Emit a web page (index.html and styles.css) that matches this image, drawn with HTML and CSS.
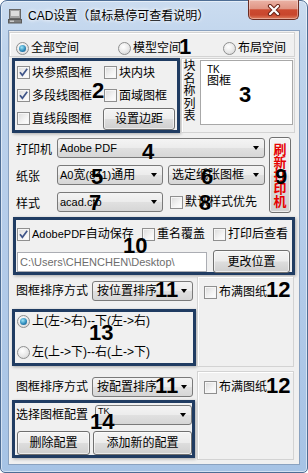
FILE: index.html
```html
<!DOCTYPE html>
<html lang="zh-CN">
<head>
<meta charset="utf-8">
<title>CAD设置</title>
<link rel="stylesheet" href="styles.css">
</head>
<body>
<div class="window">
  <div class="titlebar">
    <svg class="app-icon" width="14" height="16" viewBox="0 0 14 16">
      <rect x="1.5" y="1.5" width="11" height="9" fill="#a4a4a4" stroke="#666"/>
      <rect x="3" y="3" width="8" height="5" fill="#dcdcdc"/>
      <rect x="0.5" y="11.5" width="13" height="3.5" fill="#808080" stroke="#5a5a5a"/>
      <rect x="2" y="12.5" width="4" height="1.5" fill="#c8c8c8"/>
    </svg>
    <span class="title">CAD设置（鼠标悬停可查看说明）</span>
    <div class="close-btn">
      <svg width="14" height="12" viewBox="0 0 14 12">
        <path d="M3 2 L11 10 M11 2 L3 10" stroke="#6b2418" stroke-width="4.2" stroke-linecap="round"/>
        <path d="M3 2 L11 10 M11 2 L3 10" stroke="#ffffff" stroke-width="2.2" stroke-linecap="round"/>
      </svg>
    </div>
  </div>

  <div class="client">
    <div class="panel space-row">
      <label class="opt w-space1"><span class="radio on"></span>全部空间</label>
      <label class="opt w-space2"><span class="radio"></span>模型空间</label>
      <label class="opt"><span class="radio"></span>布局空间</label>
    </div>

    <div class="row-b">
      <div class="group g2">
        <label class="opt"><span class="check on"><svg width="11" height="11" viewBox="0 0 11 11"><path d="M2 5.2 L4.4 8.3 L9.2 1.8" fill="none" stroke="#3f5589" stroke-width="1.7"/></svg></span>块参照图框</label>
        <label class="opt"><span class="check"></span>块内块</label>
        <label class="opt"><span class="check on"><svg width="11" height="11" viewBox="0 0 11 11"><path d="M2 5.2 L4.4 8.3 L9.2 1.8" fill="none" stroke="#3f5589" stroke-width="1.7"/></svg></span>多段线图框</label>
        <label class="opt"><span class="check"></span>面域图框</label>
        <label class="opt"><span class="check"></span>直线段图框</label>
        <div class="btn btn-margin">设置边距</div>
      </div>
      <div class="panel block-panel">
        <div class="vlabel">块名称列表</div>
        <div class="listbox">
          <div class="lb-tk">TK</div>
          <div class="lb-item">图框</div>
        </div>
      </div>
    </div>

    <div class="row-c">
      <div class="printer-fields">
        <div class="field-row">
          <span class="field-label">打印机</span>
          <div class="combo combo-wide"><span class="lat">Adobe PDF</span><span class="arrow"></span></div>
        </div>
        <div class="field-row">
          <span class="field-label">纸张</span>
          <div class="combo combo-a"><span class="lat">A0</span>宽<span class="lat">(841)</span>通用<span class="arrow"></span></div>
          <div class="combo combo-b">选定纸张图框<span class="arrow"></span></div>
        </div>
        <div class="field-row">
          <span class="field-label">样式</span>
          <div class="combo combo-a"><span class="lat">acad.ctb</span><span class="arrow"></span></div>
          <label class="opt default-style"><span class="check"></span>默认样式优先</label>
        </div>
      </div>
      <div class="btn refresh-btn"><span class="refresh-text">刷新打印机</span></div>
    </div>

    <div class="group g10">
      <div class="pdf-row">
        <label class="opt w-pdf"><span class="check on"><svg width="11" height="11" viewBox="0 0 11 11"><path d="M2 5.2 L4.4 8.3 L9.2 1.8" fill="none" stroke="#3f5589" stroke-width="1.7"/></svg></span><span class="lat">AdobePDF</span>自动保存</label>
        <label class="opt w-rename"><span class="check"></span>重名覆盖</label>
        <label class="opt"><span class="check"></span>打印后查看</label>
      </div>
      <div class="path-row">
        <div class="path-box"><span class="lat">C:\Users\CHENCHEN\Desktop\</span></div>
        <div class="btn btn-change">更改位置</div>
      </div>
    </div>

    <div class="sort-section s1">
      <div class="sort-left">
        <div class="sort-row">
          <span class="sort-label">图框排序方式</span>
          <div class="combo combo-sort">按位置排序<span class="arrow"></span></div>
        </div>
        <div class="group g13">
          <label class="opt"><span class="radio on"></span>上(左-&gt;右)--下(左-&gt;右)</label>
          <label class="opt"><span class="radio"></span>左(上-&gt;下)--右(上-&gt;下)</label>
        </div>
      </div>
      <div class="panel right-panel">
        <label class="opt fill-row"><span class="check"></span>布满图纸</label>
      </div>
    </div>

    <div class="sort-section s2">
      <div class="sort-left">
        <div class="sort-row">
          <span class="sort-label">图框排序方式</span>
          <div class="combo combo-sort">按配置排序<span class="arrow"></span></div>
        </div>
        <div class="group g14">
          <div class="cfg-row">
            <span class="cfg-label">选择图框配置</span>
            <div class="combo combo-cfg"><span class="tk-small">TK</span><span class="arrow"></span></div>
          </div>
          <div class="cfg-btns">
            <div class="btn btn-del">删除配置</div>
            <div class="btn btn-add">添加新的配置</div>
          </div>
        </div>
      </div>
      <div class="panel right-panel">
        <label class="opt fill-row"><span class="check"></span>布满图纸</label>
      </div>
    </div>
  </div>

  <span class="num n1">1</span>
  <span class="num n2">2</span>
  <span class="num n3">3</span>
  <span class="num n4">4</span>
  <span class="num n5">5</span>
  <span class="num n6">6</span>
  <span class="num n7">7</span>
  <span class="num n8">8</span>
  <span class="num n9">9</span>
  <span class="num n10">10</span>
  <span class="num n11a">11</span>
  <span class="num n12a">12</span>
  <span class="num n13">13</span>
  <span class="num n11b">11</span>
  <span class="num n12b">12</span>
  <span class="num n14">14</span>
</div>
</body>
</html>
```

FILE: styles.css
```css
* { box-sizing: border-box; }
html, body { margin: 0; padding: 0; }
body {
  width: 308px;
  height: 473px;
  overflow: hidden;
  background: #ffffff;
  font-family: "Liberation Sans", "Noto Sans CJK SC", sans-serif;
  font-size: 12px;
  color: #000;
}

.window {
  position: relative;
  width: 308px;
  height: 473px;
  border: 1px solid #4e6d94;
  border-radius: 7px 7px 5px 5px;
  padding: 0 7px 7px 7px;
  background: linear-gradient(180deg, #cbdcf0 0%, #bfd4ec 10%, #b3cbe9 55%, #a6c3e5 100%);
  box-shadow: inset 0 0 0 1px rgba(255, 255, 255, 0.5);
  display: flex;
  flex-direction: column;
}

/* title bar */
.titlebar {
  height: 29px;
  flex: none;
  display: flex;
  align-items: center;
}
.app-icon { flex: none; margin-top: 1px; }
.title {
  margin-left: 6px;
  margin-top: 1px;
  font-size: 12px;
  line-height: 16px;
  white-space: nowrap;
  text-shadow: 0 0 5px #fff, 0 0 3px #fff;
}
.close-btn {
  margin-left: auto;
  margin-right: 1px;
  margin-top: -1px;
  align-self: flex-start;
  width: 51px;
  height: 20px;
  border: 1px solid #6a2c22;
  border-top: none;
  border-radius: 0 0 5px 5px;
  background: linear-gradient(180deg, #ebb3a6 0%, #e09584 45%, #cc4a30 52%, #c8462d 78%, #de7d5e 100%);
  box-shadow: inset 0 0 0 1px rgba(255, 255, 255, 0.35);
  display: flex;
  align-items: center;
  justify-content: center;
}

/* client area */
.client {
  flex: none;
  width: 292px;
  height: 435px;
  border: 1px solid #8aa2c0;
  background: #f0f0f0;
}

.panel {
  border: 1px solid #d3d3d3;
  box-shadow: inset 1px 1px 0 #ffffff;
}

.group {
  border: 3px solid #203c62;
  box-shadow: 1px 1px 3px rgba(0, 0, 0, 0.3);
}

.lat { font-size: 11px; }

/* options */
.opt {
  display: flex;
  align-items: center;
  white-space: nowrap;
  line-height: 16px;
}
.check {
  flex: none;
  position: relative;
  width: 13px;
  height: 13px;
  margin-right: 2px;
  border: 1px solid #8f8f8f;
  background: linear-gradient(135deg, #dadada 0%, #f4f4f4 60%, #ffffff 100%);
  box-shadow: inset 0 0 0 1px #f6f6f6;
  display: flex;
  align-items: center;
  justify-content: center;
}
.radio {
  flex: none;
  position: relative;
  width: 13px;
  height: 13px;
  margin-right: 2px;
  border-radius: 50%;
  border: 1px solid #8e8f8f;
  background: radial-gradient(circle at 40% 35%, #ffffff 0%, #e8e8e8 55%, #cfcfcf 100%);
}
.radio.on::after {
  content: "";
  position: absolute;
  left: 2px;
  top: 2px;
  width: 7px;
  height: 7px;
  border-radius: 50%;
  background: radial-gradient(circle at 40% 35%, #9fe6f7 0%, #2f8cbc 55%, #14497a 100%);
}

/* combo & buttons */
.combo {
  flex: none;
  display: flex;
  align-items: center;
  height: 20px;
  padding-left: 2px;
  border: 1px solid #7a7a7a;
  border-radius: 3px;
  background: linear-gradient(180deg, #f4f4f4 0%, #ececec 48%, #e0e0e0 52%, #d6d6d6 100%);
  white-space: nowrap;
  overflow: hidden;
  line-height: 16px;
}
.arrow {
  flex: none;
  margin-left: auto;
  margin-right: 5px;
  width: 0;
  height: 0;
  border-left: 3.5px solid transparent;
  border-right: 3.5px solid transparent;
  border-top: 4px solid #000;
  align-self: center;
}
.btn {
  border: 1px solid #707070;
  border-radius: 3px;
  background: linear-gradient(180deg, #f4f4f4 0%, #ececec 48%, #dddddd 52%, #cfcfcf 100%);
  box-shadow: inset 0 0 0 1px rgba(255, 255, 255, 0.6);
  display: flex;
  align-items: center;
  justify-content: center;
  white-space: nowrap;
  line-height: 16px;
}

/* row 1: space radios */
.space-row {
  margin-top: 1px;
  width: 286px;
  height: 25px;
  display: flex;
  align-items: flex-start;
  padding: 7px 0 0 6px;
}
.w-space1 { width: 102px; }
.w-space2 { width: 105px; }

/* row 2 */
.row-b {
  display: flex;
  margin-top: 1px;
  height: 75px;
}
.g2 {
  margin-left: 3px;
  width: 168px;
  height: 75px;
  display: grid;
  grid-template-columns: 87px 1fr;
  grid-auto-rows: 23px;
  align-items: center;
  padding-left: 2px;
}
.btn-margin {
  margin-left: -1px;
  width: 72px;
  height: 22px;
}
.block-panel {
  margin-left: 1px;
  width: 114px;
  height: 75px;
  display: flex;
  align-items: flex-start;
  padding: 1px 0 0 1px;
}
.vlabel {
  width: 13px;
  font-size: 12px;
  line-height: 12.5px;
  text-align: center;
  word-break: break-all;
}
.listbox {
  margin-left: 4px;
  width: 93px;
  height: 65px;
  background: #ffffff;
  border: 1px solid #a8a8a8;
  padding: 3px 0 0 6px;
}
.lb-tk { font-size: 10px; line-height: 11px; }
.lb-item { font-size: 12px; line-height: 13px; }

/* row 3: printer */
.row-c {
  display: flex;
  margin-top: 2px;
  height: 80px;
}
.printer-fields {
  width: 260px;
  padding: 3px 0 0 7px;
  display: flex;
  flex-direction: column;
  gap: 7px;
}
.field-row {
  display: flex;
  align-items: center;
  height: 20px;
}
.field-label { width: 41px; flex: none; }
.combo-wide { width: 208px; }
.combo-a { width: 106px; }
.combo-b { width: 97px; margin-left: 5px; padding-left: 3px; }
.default-style { margin-left: 7px; }
.refresh-btn {
  width: 22px;
  height: 76px;
  margin-top: 2px;
}
.refresh-text {
  width: 13px;
  font-size: 13px;
  line-height: 13px;
  font-weight: bold;
  color: #e60000;
  text-align: center;
  word-break: break-all;
  white-space: normal;
}

/* group 10 */
.g10 {
  margin: 2px 0 0 4px;
  width: 282px;
  height: 58px;
  padding: 3px 0 0 1px;
}
.pdf-row {
  display: flex;
  align-items: center;
  height: 22px;
}
.w-pdf { width: 125px; }
.w-rename { width: 71px; }
.path-row {
  display: flex;
  align-items: center;
  margin-top: 5px;
  height: 23px;
}
.path-box {
  width: 190px;
  height: 20px;
  background: #ffffff;
  border: 1px solid #abadb3;
  color: #6d6d6d;
  padding-left: 2px;
  display: flex;
  align-items: center;
  white-space: nowrap;
  overflow: hidden;
}
.btn-change {
  width: 77px;
  height: 23px;
  margin-left: 6px;
}

/* sort sections */
.sort-section { display: flex; }
.s1 { margin-top: 1px; height: 91px; }
.s2 { margin-top: 4px; height: 89px; }
.sort-left {
  width: 188px;
  display: flex;
  flex-direction: column;
}
.sort-row {
  display: flex;
  align-items: flex-start;
  padding-left: 7px;
}
.s1 .sort-row { height: 33px; padding-top: 5px; }
.s2 .sort-row { height: 29px; padding-top: 6px; }
.sort-label { width: 76px; flex: none; line-height: 20px; }
.combo-sort { width: 101px; padding-left: 4px; }
.right-panel {
  width: 97px;
  padding: 5px 0 0 6px;
}
.fill-row { height: 20px; }

.g13 {
  margin-left: 3px;
  width: 184px;
  height: 57px;
  padding: 1px 0 0 2px;
  display: flex;
  flex-direction: column;
  gap: 15px;
}
.g13 .opt { height: 16px; }

.g14 {
  margin-left: 3px;
  width: 183px;
  height: 58px;
  padding-left: 1px;
}
.cfg-row {
  display: flex;
  align-items: flex-start;
  height: 24px;
  padding-top: 2px;
}
.cfg-label { width: 79px; flex: none; line-height: 20px; }
.combo-cfg {
  width: 97px;
  align-items: flex-start;
}
.tk-small {
  font-size: 9px;
  line-height: 9px;
  margin-top: 1px;
}
.cfg-btns {
  display: flex;
  margin-top: 4px;
}
.btn-del { width: 73px; height: 24px; margin-left: 1px; }
.btn-add { width: 99px; height: 24px; margin-left: 3px; }

/* overlaid bold callout numbers */
.num {
  position: absolute;
  font-family: "Liberation Sans", sans-serif;
  font-weight: bold;
  font-size: 22px;
  line-height: 22px;
  color: #000;
}
.n1 { left: 178px; top: 35px; }
.n2 { left: 91px; top: 79px; }
.n3 { left: 238px; top: 83px; }
.n4 { left: 141px; top: 140px; }
.n5 { left: 90px; top: 165px; }
.n6 { left: 200px; top: 165px; }
.n7 { left: 88px; top: 191px; }
.n8 { left: 198px; top: 191px; }
.n9 { left: 274px; top: 165px; }
.n10 { left: 122px; top: 234px; }
.n11a { left: 154px; top: 278px; }
.n12a { left: 265px; top: 278px; }
.n13 { left: 88px; top: 321px; }
.n11b { left: 154px; top: 374px; }
.n12b { left: 265px; top: 374px; }
.n14 { left: 89px; top: 410px; }
```
